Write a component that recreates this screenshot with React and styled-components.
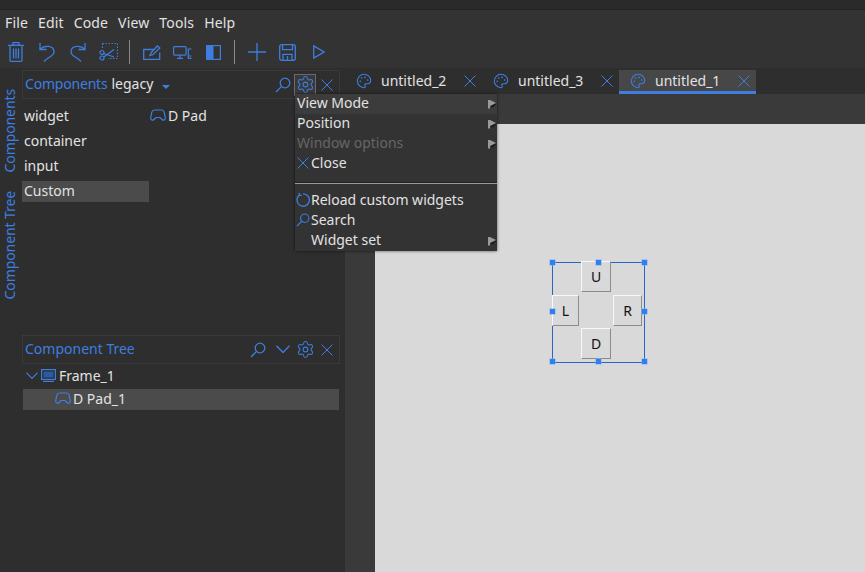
import { styled, createGlobalStyle } from "styled-components";
import { Palette, Settings } from "lucide-react";

const BLUE = "#3d7ee0";

const GlobalStyle = createGlobalStyle`
  html, body {
    margin: 0;
    padding: 0;
    background: #2e2e2e;
    font-family: "Noto Sans", "Open Sans", sans-serif;
    font-size: 14px;
    color: #e2e2e2;
  }
`;

const Page = styled.div`
  position: relative;
  width: 865px;
  height: 572px;
  overflow: hidden;
  display: flex;
  flex-direction: column;
  background: #2e2e2e;
`;

const TitleBar = styled.div`
  height: 9px;
  flex: none;
  background: #2a2a2a;
  border-bottom: 1px solid #242424;
`;

const MenuBar = styled.div`
  height: 24px;
  flex: none;
  display: flex;
  align-items: center;
  gap: 10px;
  padding-left: 5px;
  background: #333333;
  letter-spacing: 0.15px;
`;

const Toolbar = styled.div`
  height: 34px;
  flex: none;
  display: flex;
  align-items: center;
  padding-top: 2px;
  box-sizing: border-box;
  background: #333333;
`;

const ToolSlot = styled.span`
  width: 31px;
  height: 24px;
  flex: none;
  display: flex;
  align-items: center;
  justify-content: center;
`;

const ToolSep = styled.span`
  width: 1px;
  height: 24px;
  flex: none;
  margin: 0 6px 0 5px;
  background: #8a8a8a;
`;

const Main = styled.div`
  flex: 1;
  display: flex;
  min-height: 0;
`;

const SideTabs = styled.div`
  width: 22px;
  flex: none;
  display: flex;
  flex-direction: column;
  align-items: center;
  gap: 19px;
  padding: 21px 4px 0 0;
  box-sizing: border-box;
`;

const SideTab = styled.span`
  writing-mode: vertical-rl;
  transform: rotate(180deg);
  color: ${BLUE};
  white-space: nowrap;
  letter-spacing: -0.1px;
`;

const LeftColumn = styled.div`
  width: 318px;
  flex: none;
  display: flex;
  flex-direction: column;
`;

const Sash = styled.div`
  width: 5px;
  flex: none;
  background: #2e2e2e;
`;

const PanelHeader = styled.div`
  height: 29px;
  flex: none;
  display: flex;
  align-items: center;
  padding: 0 1px 2px 2px;
  box-sizing: border-box;
  border: 1px solid #3a3a3a;
  color: ${BLUE};
  margin-top: ${(p) => p.$top || 0}px;
`;

const HeaderTitle = styled.span`
  flex: 1;
  display: flex;
  align-items: center;
  gap: 4px;
  white-space: nowrap;
`;

const TightLabel = styled.span`
  letter-spacing: -0.2px;
`;

const LegacyLabel = styled.span`
  color: #e2e2e2;
`;

const DropCaret = styled.span`
  width: 0;
  height: 0;
  margin: 7px 0 0 5px;
  border-left: 4px solid transparent;
  border-right: 4px solid transparent;
  border-top: 4px solid ${BLUE};
`;

const HeaderIcon = styled.span`
  width: 22px;
  height: 22px;
  flex: none;
  display: flex;
  align-items: center;
  justify-content: center;
  box-sizing: border-box;
  margin-top: 2px;
  margin-right: ${(p) => p.$gap || 0}px;
  border: ${(p) => (p.$active ? "1px solid #6a6a6a" : "none")};
  background: ${(p) => (p.$active ? "#3a3a3a" : "transparent")};
`;

const GearIcon = styled(Settings)`
  color: ${BLUE};
`;

const ComponentsBody = styled.div`
  height: 236px;
  flex: none;
  display: flex;
  padding-top: 7px;
  box-sizing: border-box;
`;

const CategoryList = styled.div`
  width: 127px;
  flex: none;
`;

const CategoryRow = styled.div`
  height: 21px;
  line-height: 19px;
  margin-bottom: 4px;
  padding-left: 2px;
  background: ${(p) => (p.$selected ? "#4b4b4b" : "transparent")};
`;

const WidgetItem = styled.div`
  height: 21px;
  display: flex;
  align-items: center;
  gap: 2px;
  padding: 0 0 2px 1px;
  box-sizing: border-box;
`;

const ItemText = styled.span`
  color: #e2e2e2;
  white-space: nowrap;
`;

const TreeRow = styled.div`
  height: 21px;
  margin: 0 1px 2px 1px;
  box-sizing: border-box;
  display: flex;
  align-items: center;
  gap: ${(p) => p.$gap}px;
  padding: 0 0 2px ${(p) => p.$indent}px;
  background: ${(p) => (p.$selected ? "#4b4b4b" : "transparent")};
`;

const TreeBody = styled.div`
  padding-top: 2px;
`;

const Workspace = styled.div`
  flex: 1;
  display: flex;
  flex-direction: column;
  min-width: 0;
`;

const TabBar = styled.div`
  height: 24px;
  flex: none;
  margin-top: 2px;
  display: flex;
`;

const Tab = styled.div`
  width: 137px;
  flex: none;
  height: 24px;
  box-sizing: border-box;
  display: flex;
  align-items: center;
  padding-left: 11px;
  color: ${BLUE};
  background: ${(p) => (p.$active ? "#474747" : "transparent")};
  border-bottom: 3px solid ${(p) => (p.$active ? BLUE : "transparent")};
`;

const TabLabel = styled.span`
  margin-left: 9px;
  width: 83px;
  color: #e2e2e2;
  white-space: nowrap;
`;

const CanvasArea = styled.div`
  flex: 1;
  display: flex;
  flex-direction: column;
  background: #3a3a3a;
  padding-left: 30px;
  padding-top: 30px;
  min-height: 0;
`;

const Canvas = styled.div`
  position: relative;
  flex: 1;
  background: #d9d9d9;
`;

const Selection = styled.div`
  position: absolute;
  left: 177px;
  top: 138px;
  width: 91px;
  height: 99px;
  border: 1px solid #2a64c4;
`;

const Handle = styled.span`
  position: absolute;
  left: ${(p) => p.$x}px;
  top: ${(p) => p.$y}px;
  width: 5px;
  height: 5px;
  background: #2f7ff0;
  box-shadow: 0 0 0 0.5px #7fb0f5;
`;

const PadButton = styled.div`
  position: absolute;
  left: ${(p) => p.$x}px;
  top: ${(p) => p.$y}px;
  width: ${(p) => p.$w}px;
  height: 31px;
  box-sizing: border-box;
  display: flex;
  align-items: center;
  justify-content: center;
  background: #d9d9d9;
  border-top: 1px solid #f8f8f8;
  border-left: 1px solid #f8f8f8;
  border-right: 1px solid #8c8c8c;
  border-bottom: 1px solid #8c8c8c;
  color: #111111;
  font-size: 14px;
`;

const PopupMenu = styled.div`
  position: absolute;
  left: 295px;
  top: 94px;
  width: 202px;
  height: 157px;
  box-sizing: border-box;
  background: #333333;
  box-shadow: 0 0 3px rgba(0, 0, 0, 0.6);
`;

const MenuRow = styled.div`
  position: relative;
  height: 20px;
  box-sizing: border-box;
  display: flex;
  align-items: center;
  padding: 0 0 4px ${(p) => (p.$flush ? 2 : 16)}px;
  background: ${(p) => (p.$hover ? "#3c3c3c" : "transparent")};
  color: ${(p) => (p.$disabled ? "#666666" : "#e2e2e2")};
  white-space: nowrap;
`;

const MenuIcon = styled.span`
  position: absolute;
  left: 1px;
  top: 2px;
  width: 14px;
  height: 14px;
  display: flex;
  align-items: center;
  justify-content: center;
`;

const SubArrowSvg = styled.svg`
  position: absolute;
  right: 0;
  top: 6px;
`;

const MenuSeparator = styled.div`
  height: 1px;
  margin: 9px 0 7px;
  background: #9a9a9a;
  box-shadow: 0 -1px 0 #222222;
`;

function SubArrow() {
  return (
    <SubArrowSvg width="9" height="9" viewBox="0 0 9 9">
      <path d="M3 3.500h6L5 7.500H3Z" fill="#1f1f1f" />
      <path d="M0 0h2l6 3-6 3v2.500H0Z" fill="#9a9a9a" />
    </SubArrowSvg>
  );
}

function SearchIcon({ size = 16 }) {
  return (
    <svg width={size} height={size} viewBox="0 0 16 16" fill="none" stroke={BLUE} strokeWidth="1.3">
      <circle cx="10" cy="6" r="4.800" />
      <path d="M6.600 9.400 1 15" />
    </svg>
  );
}

function CloseIcon({ size = 12 }) {
  return (
    <svg width={size} height={size} viewBox="0 0 12 12" fill="none" stroke={BLUE} strokeWidth="1">
      <path d="M.5.500l11 11M11.500.500l-11 11" />
    </svg>
  );
}

function ChevronIcon({ size = 14 }) {
  return (
    <svg width={size} height={size * 0.6} viewBox="0 0 14 8.400" fill="none" stroke={BLUE} strokeWidth="1.300">
      <path d="M.5.700 7 7.500 13.500.700" />
    </svg>
  );
}

function PadIcon() {
  return (
    <svg width="16" height="13" viewBox="0 0 16 13" fill="none" stroke={BLUE} strokeWidth="1.200">
      <path d="M4.500 1h7c1.500 0 2.300.8 2.700 2.200l1.100 5.600c.3 2-1.900 3.100-3.300 1.700L10 8.500H6l-2 2C2.600 11.900.4 10.800.7 8.800l1.100-5.600C2.200 1.800 3 1 4.500 1Z" />
    </svg>
  );
}

function TrashIcon() {
  return (
    <svg width="16" height="20" viewBox="0 0 16 20" fill="none" stroke={BLUE} strokeWidth="1.300">
      <path d="M0 3.300h16M5 3.300V.7h6v2.600" />
      <rect x="2" y="3.300" width="12" height="16" rx="1" />
      <path d="M5.500 6.500v10M8 6.500v10M10.500 6.500v10" />
    </svg>
  );
}

function UndoIcon() {
  return (
    <svg width="16" height="20" viewBox="0 0 16 20" fill="none" stroke={BLUE} strokeWidth="1.300">
      <path d="M1 1v6.500h6.500" />
      <path d="M1 7.500C5 3 15 3 15 10c0 4-6 5-10 9.500" />
    </svg>
  );
}

function RedoIcon() {
  return (
    <svg width="16" height="20" viewBox="0 0 16 20" fill="none" stroke={BLUE} strokeWidth="1.300">
      <path d="M15 1v6.500H8.500" />
      <path d="M15 7.500C11 3 1 3 1 10c0 4 6 5 10 9.500" />
    </svg>
  );
}

function CutIcon() {
  return (
    <svg width="19" height="18" viewBox="0 0 19 18" fill="none" stroke={BLUE} strokeWidth="1.200">
      <path d="M3.500.500h15v15H9M3.500.500v5" strokeDasharray="1.500 1.500" />
      <circle cx="3" cy="9.500" r="2" />
      <circle cx="3" cy="15" r="2" />
      <path d="M4.800 10.500 15 14M4.800 14 15 6.500" />
    </svg>
  );
}

function TabletIcon() {
  return (
    <svg width="18" height="15" viewBox="0 0 18 15" fill="none" stroke={BLUE} strokeWidth="1.300">
      <path d="M10.500 4.500H.7v9.800h16V7.500" />
      <path d="M7 10.500 8 7.800 14.300 1 16.800 3 10 9.500Z" />
    </svg>
  );
}

function DevicesIcon() {
  return (
    <svg width="19" height="13" viewBox="0 0 19 13" fill="none" stroke={BLUE} strokeWidth="1.200">
      <rect x=".6" y=".6" width="12.500" height="8.500" rx="1" />
      <path d="M7 9v3M4 12.400h6M18.500 3h-3.200v9.400h3.200M15.300 10h3.200" />
    </svg>
  );
}

function HalfIcon() {
  return (
    <svg width="15" height="15" viewBox="0 0 15 15">
      <rect x=".6" y=".6" width="13.800" height="13.800" fill="none" stroke={BLUE} strokeWidth="1.200" />
      <rect x="0" y="0" width="7.500" height="15" fill={BLUE} />
    </svg>
  );
}

function PlusIcon() {
  return (
    <svg width="18" height="18" viewBox="0 0 18 18" fill="none" stroke={BLUE} strokeWidth="1.300">
      <path d="M9 0v18M0 9h18" />
    </svg>
  );
}

function SaveIcon() {
  return (
    <svg width="17" height="17" viewBox="0 0 17 17" fill="none" stroke={BLUE} strokeWidth="1.300">
      <rect x=".7" y=".7" width="15.600" height="15.600" rx="2" />
      <path d="M3.500.700v5h10v-5M4 16.300v-6h9v6M8.500 12v4" />
    </svg>
  );
}

function PlayIcon() {
  return (
    <svg width="12" height="14" viewBox="0 0 12 14" fill="none" stroke={BLUE} strokeWidth="1.300">
      <path d="M.7.900 11 7 .7 13.100Z" />
    </svg>
  );
}

function FrameIcon() {
  return (
    <svg width="15" height="13" viewBox="0 0 15 13">
      <rect x=".6" y=".6" width="13.800" height="9.800" fill="none" stroke={BLUE} strokeWidth="1.200" />
      <rect x="2.500" y="2.500" width="10" height="6" fill="#2c5aa0" />
      <path d="M2 12.400h11" stroke={BLUE} strokeWidth="1.200" />
    </svg>
  );
}

function ReloadIcon() {
  return (
    <svg width="14" height="14" viewBox="0 0 14 14" fill="none" stroke={BLUE} strokeWidth="1.300">
      <path d="M3.500 2A6.200 6.200 0 1 0 7 .8" />
      <path d="M3.200 0v2.400h2.500" />
    </svg>
  );
}

export default function App() {
  return (
    <Page>
      <GlobalStyle />
      <TitleBar />
      <MenuBar>
        {["File", "Edit", "Code", "View", "Tools", "Help"].map((m) => (
          <span key={m}>{m}</span>
        ))}
      </MenuBar>
      <Toolbar>
        <ToolSlot><TrashIcon /></ToolSlot>
        <ToolSlot><UndoIcon /></ToolSlot>
        <ToolSlot><RedoIcon /></ToolSlot>
        <ToolSlot><CutIcon /></ToolSlot>
        <ToolSep />
        <ToolSlot><TabletIcon /></ToolSlot>
        <ToolSlot><DevicesIcon /></ToolSlot>
        <ToolSlot><HalfIcon /></ToolSlot>
        <ToolSep />
        <ToolSlot><PlusIcon /></ToolSlot>
        <ToolSlot><SaveIcon /></ToolSlot>
        <ToolSlot><PlayIcon /></ToolSlot>
      </Toolbar>
      <Main>
        <SideTabs>
          <SideTab>Components</SideTab>
          <SideTab>Component Tree</SideTab>
        </SideTabs>
        <LeftColumn>
          <PanelHeader $top={2}>
            <HeaderTitle>
              <TightLabel>Components</TightLabel>
              <LegacyLabel>legacy</LegacyLabel>
              <DropCaret />
            </HeaderTitle>
            <HeaderIcon><SearchIcon /></HeaderIcon>
            <HeaderIcon $active><GearIcon size={19} strokeWidth={1.3} /></HeaderIcon>
            <HeaderIcon><CloseIcon /></HeaderIcon>
          </PanelHeader>
          <ComponentsBody>
            <CategoryList>
              <CategoryRow>widget</CategoryRow>
              <CategoryRow>container</CategoryRow>
              <CategoryRow>input</CategoryRow>
              <CategoryRow $selected>Custom</CategoryRow>
            </CategoryList>
            <WidgetItem>
              <PadIcon />
              <ItemText>D Pad</ItemText>
            </WidgetItem>
          </ComponentsBody>
          <PanelHeader>
            <HeaderTitle>Component Tree</HeaderTitle>
            <HeaderIcon $gap={3}><SearchIcon /></HeaderIcon>
            <HeaderIcon><ChevronIcon /></HeaderIcon>
            <HeaderIcon><GearIcon size={19} strokeWidth={1.3} /></HeaderIcon>
            <HeaderIcon><CloseIcon /></HeaderIcon>
          </PanelHeader>
          <TreeBody>
            <TreeRow $indent={3} $gap={3}>
              <ChevronIcon size={12} />
              <FrameIcon />
              <ItemText>Frame_1</ItemText>
            </TreeRow>
            <TreeRow $selected $indent={32} $gap={2}>
              <PadIcon />
              <ItemText>D Pad_1</ItemText>
            </TreeRow>
          </TreeBody>
        </LeftColumn>
        <Sash />
        <Workspace>
          <TabBar>
            <Tab>
              <Palette size={16} strokeWidth={1.6} />
              <TabLabel>untitled_2</TabLabel>
              <CloseIcon />
            </Tab>
            <Tab>
              <Palette size={16} strokeWidth={1.6} />
              <TabLabel>untitled_3</TabLabel>
              <CloseIcon />
            </Tab>
            <Tab $active>
              <Palette size={16} strokeWidth={1.6} />
              <TabLabel>untitled_1</TabLabel>
              <CloseIcon />
            </Tab>
          </TabBar>
          <CanvasArea>
            <Canvas>
              <Selection>
                <PadButton $x={28} $y={-2} $w={30}>U</PadButton>
                <PadButton $x={-1} $y={32} $w={27}>L</PadButton>
                <PadButton $x={60} $y={32} $w={29}>R</PadButton>
                <PadButton $x={28} $y={65} $w={30}>D</PadButton>
                <Handle $x={-3} $y={-3} />
                <Handle $x={43} $y={-3} />
                <Handle $x={89} $y={-3} />
                <Handle $x={-3} $y={46} />
                <Handle $x={89} $y={46} />
                <Handle $x={-3} $y={96} />
                <Handle $x={43} $y={96} />
                <Handle $x={89} $y={96} />
              </Selection>
            </Canvas>
          </CanvasArea>
        </Workspace>
      </Main>
      <PopupMenu>
        <MenuRow $flush $hover>View Mode<SubArrow /></MenuRow>
        <MenuRow $flush>Position<SubArrow /></MenuRow>
        <MenuRow $flush $disabled>Window options<SubArrow /></MenuRow>
        <MenuRow>
          <MenuIcon><CloseIcon /></MenuIcon>
          Close
        </MenuRow>
        <MenuSeparator />
        <MenuRow>
          <MenuIcon><ReloadIcon /></MenuIcon>
          Reload custom widgets
        </MenuRow>
        <MenuRow>
          <MenuIcon><SearchIcon size={14} /></MenuIcon>
          Search
        </MenuRow>
        <MenuRow>
          Widget set
          <SubArrow />
        </MenuRow>
      </PopupMenu>
    </Page>
  );
}
